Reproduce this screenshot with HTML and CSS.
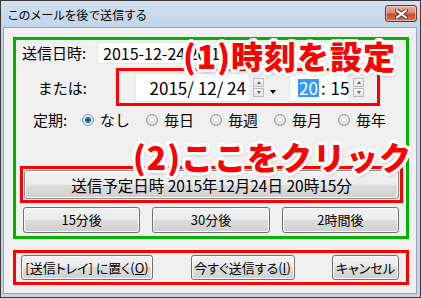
FILE: index.html
```html
<!DOCTYPE html>
<html lang="ja">
<head>
    <meta charset="UTF-8">
    <title>このメールを後で送信する</title>
    <link rel="stylesheet" href="styles.css">
</head>
<body>
    <div class="window">
        <div class="titlebar">
            <span class="title">このメールを後で送信する</span>
            <button class="close" aria-label="閉じる">
                <svg width="13" height="10" viewBox="0 0 13 10">
                    <path d="M2 1.5 L11 8.5 M11 1.5 L2 8.5" stroke="#4a3a38" stroke-width="4" stroke-linecap="square"/>
                    <path d="M2 1.5 L11 8.5 M11 1.5 L2 8.5" stroke="#ffffff" stroke-width="2" stroke-linecap="square"/>
                </svg>
            </button>
        </div>

        <div class="client">
            <!-- schedule settings (green frame) -->
            <div class="schedule">
                <div class="row row-date">
                    <span class="label">送信日時:</span>
                    <div class="field field-text">2015-12-24 20:15</div>
                </div>
                <div class="row row-picker">
                    <span class="label label-right">または:</span>
                    <div class="field field-date">2015/ 12/ 24</div>
                    <div class="spin"><span class="spin-up"></span><span class="spin-down"></span></div>
                    <span class="drop"></span>
                    <div class="field field-time"><span class="sel">20</span><span class="colon">:</span>15</div>
                    <div class="spin"><span class="spin-up"></span><span class="spin-down"></span></div>
                </div>
                <div class="row row-repeat">
                    <span class="label-short">定期:</span>
                    <div class="radios">
                        <label class="radio-item"><span class="radio checked"></span>なし</label>
                        <label class="radio-item"><span class="radio"></span>毎日</label>
                        <label class="radio-item"><span class="radio"></span>毎週</label>
                        <label class="radio-item"><span class="radio"></span>毎月</label>
                        <label class="radio-item"><span class="radio"></span>毎年</label>
                    </div>
                </div>
                <div class="mark mark-main">
                    <button class="btn btn-wide">送信予定日時 2015年12月24日 20時15分</button>
                </div>
                <div class="quick">
                    <button class="btn">15分後</button>
                    <button class="btn">30分後</button>
                    <button class="btn">2時間後</button>
                </div>
            </div>

            <!-- bottom actions (red frame) -->
            <div class="mark mark-actions">
                <button class="btn btn-tray">[送信トレイ] に置く(<u>O</u>)</button>
                <button class="btn btn-now">今すぐ送信する(<u>I</u>)</button>
                <button class="btn btn-cancel">キャンセル</button>
            </div>

            <!-- annotations -->
            <div class="mark mark-picker"></div>
            <div class="note note-1">(1)時刻を設定</div>
            <div class="note note-2">(2)ここをクリック</div>
        </div>
    </div>
</body>
</html>
```

FILE: styles.css
```css
body {
    margin: 0;
    font-family: "Noto Sans CJK JP", "Noto Sans", sans-serif;
    color: #000;
    background: #ffffff;
}

.window {
    width: 421px;
    height: 298px;
    box-sizing: border-box;
    border: 1px solid #3a3a3a;
    padding: 0 3px 3px 2px;
    background: #c5d6eb;
    display: flex;
    flex-direction: column;
}

/* title bar */
.titlebar {
    height: 26px;
    margin: 0 -3px 0 -2px;
    padding: 0 3px 0 7px;
    display: flex;
    justify-content: space-between;
    align-items: flex-start;
    background: linear-gradient(#d3e1f1, #c2d4ea);
}

.title {
    font-size: 12px;
    line-height: 16px;
    margin-top: 6px;
    font-feature-settings: "palt";
    letter-spacing: 0.3px;
}

.close {
    width: 32px;
    height: 17px;
    margin-top: 4px;
    padding: 0;
    border: 1px solid #6e3328;
    border-radius: 3px;
    background: linear-gradient(#eeb1a2 0%, #dc8670 45%, #c8492f 55%, #d9745a 100%);
    box-shadow: inset 0 0 0 1px rgba(255, 220, 210, 0.6);
    display: flex;
    align-items: center;
    justify-content: center;
}

.close svg {
    display: block;
}

/* client area */
.client {
    flex: 1;
    position: relative;
    border: 1px solid #97a3b3;
    background: #f0f0f0;
    padding: 9px 0 0 9px;
}

.schedule {
    width: 396px;
    box-sizing: border-box;
    border: 3px solid #00b300;
    padding-bottom: 3px;
}

.row {
    display: flex;
    align-items: center;
    padding-left: 6px;
}

.label {
    width: 65px;
    margin-right: 10px;
    font-size: 15px;
    line-height: 22px;
}

.label-right {
    text-align: right;
}

.field {
    box-sizing: border-box;
    background: #ffffff;
    border: 1px solid #e4e6ea;
}

.row-date {
    margin-top: 2px;
    height: 22px;
}

.field-text {
    width: 298px;
    height: 22px;
    padding-left: 5px;
    font-size: 16px;
    line-height: 20px;
}

.row-picker {
    margin-top: 9px;
    height: 29px;
}

.field-date {
    width: 115px;
    height: 29px;
    margin-left: 38px;
    padding-right: 3px;
    text-align: right;
    font-size: 17px;
    line-height: 27px;
}

.field-time {
    width: 60px;
    height: 29px;
    margin-left: 13px;
    padding-left: 8px;
    display: flex;
    align-items: center;
    font-size: 17px;
    line-height: 18px;
}

.sel {
    background: #3399ff;
    color: #ffffff;
    padding: 0 1px;
    height: 18px;
}

.colon {
    margin: 0 5px 0 2px;
}

.spin {
    width: 11px;
    height: 19px;
    margin-left: 3px;
    display: flex;
    flex-direction: column;
    justify-content: space-between;
}

.field-time + .spin {
    margin-left: 4px;
}

.spin span {
    height: 9px;
    box-sizing: border-box;
    border: 1px solid #bcbcbc;
    background: linear-gradient(#f7f7f7, #e4e4e4);
    display: flex;
    align-items: center;
    justify-content: center;
}

.spin-up::after {
    content: "";
    border-left: 2.5px solid transparent;
    border-right: 2.5px solid transparent;
    border-bottom: 3px solid #50627c;
}

.spin-down::after {
    content: "";
    border-left: 2.5px solid transparent;
    border-right: 2.5px solid transparent;
    border-top: 3px solid #50627c;
}

.drop {
    align-self: flex-end;
    margin: 0 0 8px 6px;
    border-left: 3.5px solid transparent;
    border-right: 3.5px solid transparent;
    border-top: 4px solid #000;
}

.row-repeat {
    margin-top: 8px;
    height: 20px;
    padding-left: 17px;
    font-size: 15px;
    line-height: 20px;
}

.label-short {
    width: 35px;
    margin-right: 14px;
    white-space: nowrap;
}

.radios {
    display: flex;
    gap: 16px;
}

.radio-item {
    display: flex;
    align-items: center;
    white-space: nowrap;
}

.radio {
    width: 12px;
    height: 12px;
    flex: none;
    box-sizing: border-box;
    margin-right: 6px;
    border-radius: 50%;
    border: 1px solid #929292;
    background: radial-gradient(circle at 50% 40%, #f6f6f6 0, #dcdcdc 70%, #c9c9c9 100%);
}

.radio.checked {
    background: radial-gradient(circle at 50% 50%, #123f7a 0, #1d64b5 1.6px, #4f97de 3px, #dfe9f3 3.6px, #e9e9e9 100%);
}

/* red marks */
.mark {
    box-sizing: border-box;
    border: 3px solid #ff0000;
}

.mark-main {
    width: 383px;
    height: 37px;
    margin: 36px 0 0 4px;
    padding: 1px;
    display: flex;
}

.mark-picker {
    position: absolute;
    left: 112px;
    top: 40px;
    width: 264px;
    height: 38px;
}

.mark-actions {
    width: 396px;
    height: 35px;
    margin-top: 11px;
    padding: 0 7px 0 5px;
    display: flex;
    justify-content: space-between;
    align-items: center;
}

/* buttons */
.btn {
    font-family: "Noto Sans CJK JP", "Noto Sans", sans-serif;
    font-size: 13px;
    line-height: 16px;
    color: #000;
    padding: 0;
    border: 1px solid #707070;
    border-radius: 3px;
    background: linear-gradient(#f2f2f2 0%, #ebebeb 50%, #dddddd 50%, #cfcfcf 100%);
    box-shadow: inset 0 0 0 1px #fbfbfb;
    font-feature-settings: "palt";
}

.btn-wide {
    flex: 1;
    font-size: 15.5px;
    font-feature-settings: normal;
    border-color: #8c8c8c;
}

.quick {
    margin-top: 4px;
    padding: 0 7px;
    display: grid;
    grid-template-columns: 1fr 1fr 1fr;
    gap: 12px;
}

.quick .btn {
    height: 26px;
}

.mark-actions .btn {
    height: 25px;
}

.btn-tray {
    width: 132px;
}

.btn-now {
    width: 104px;
}

.btn-cancel {
    width: 67px;
}

/* annotation labels */
.note {
    position: absolute;
    font-size: 32px;
    line-height: 32px;
    font-weight: 900;
    letter-spacing: 1px;
    color: #ff0000;
    white-space: nowrap;
    text-shadow:
        2px 0 0 #fff, -2px 0 0 #fff, 0 2px 0 #fff, 0 -2px 0 #fff,
        2px 2px 0 #fff, -2px 2px 0 #fff, 2px -2px 0 #fff, -2px -2px 0 #fff,
        3px 0 0 #fff, -3px 0 0 #fff, 0 3px 0 #fff, 0 -3px 0 #fff,
        1px 3px 0 #fff, -1px 3px 0 #fff, 1px -3px 0 #fff, -1px -3px 0 #fff,
        3px 1px 0 #fff, 3px -1px 0 #fff, -3px 1px 0 #fff, -3px -1px 0 #fff,
        1px 2px 4px rgba(0, 0, 0, 0.45);
}

.note-1 {
    left: 179px;
    top: 11px;
}

.note-2 {
    left: 129px;
    top: 112px;
}
```
